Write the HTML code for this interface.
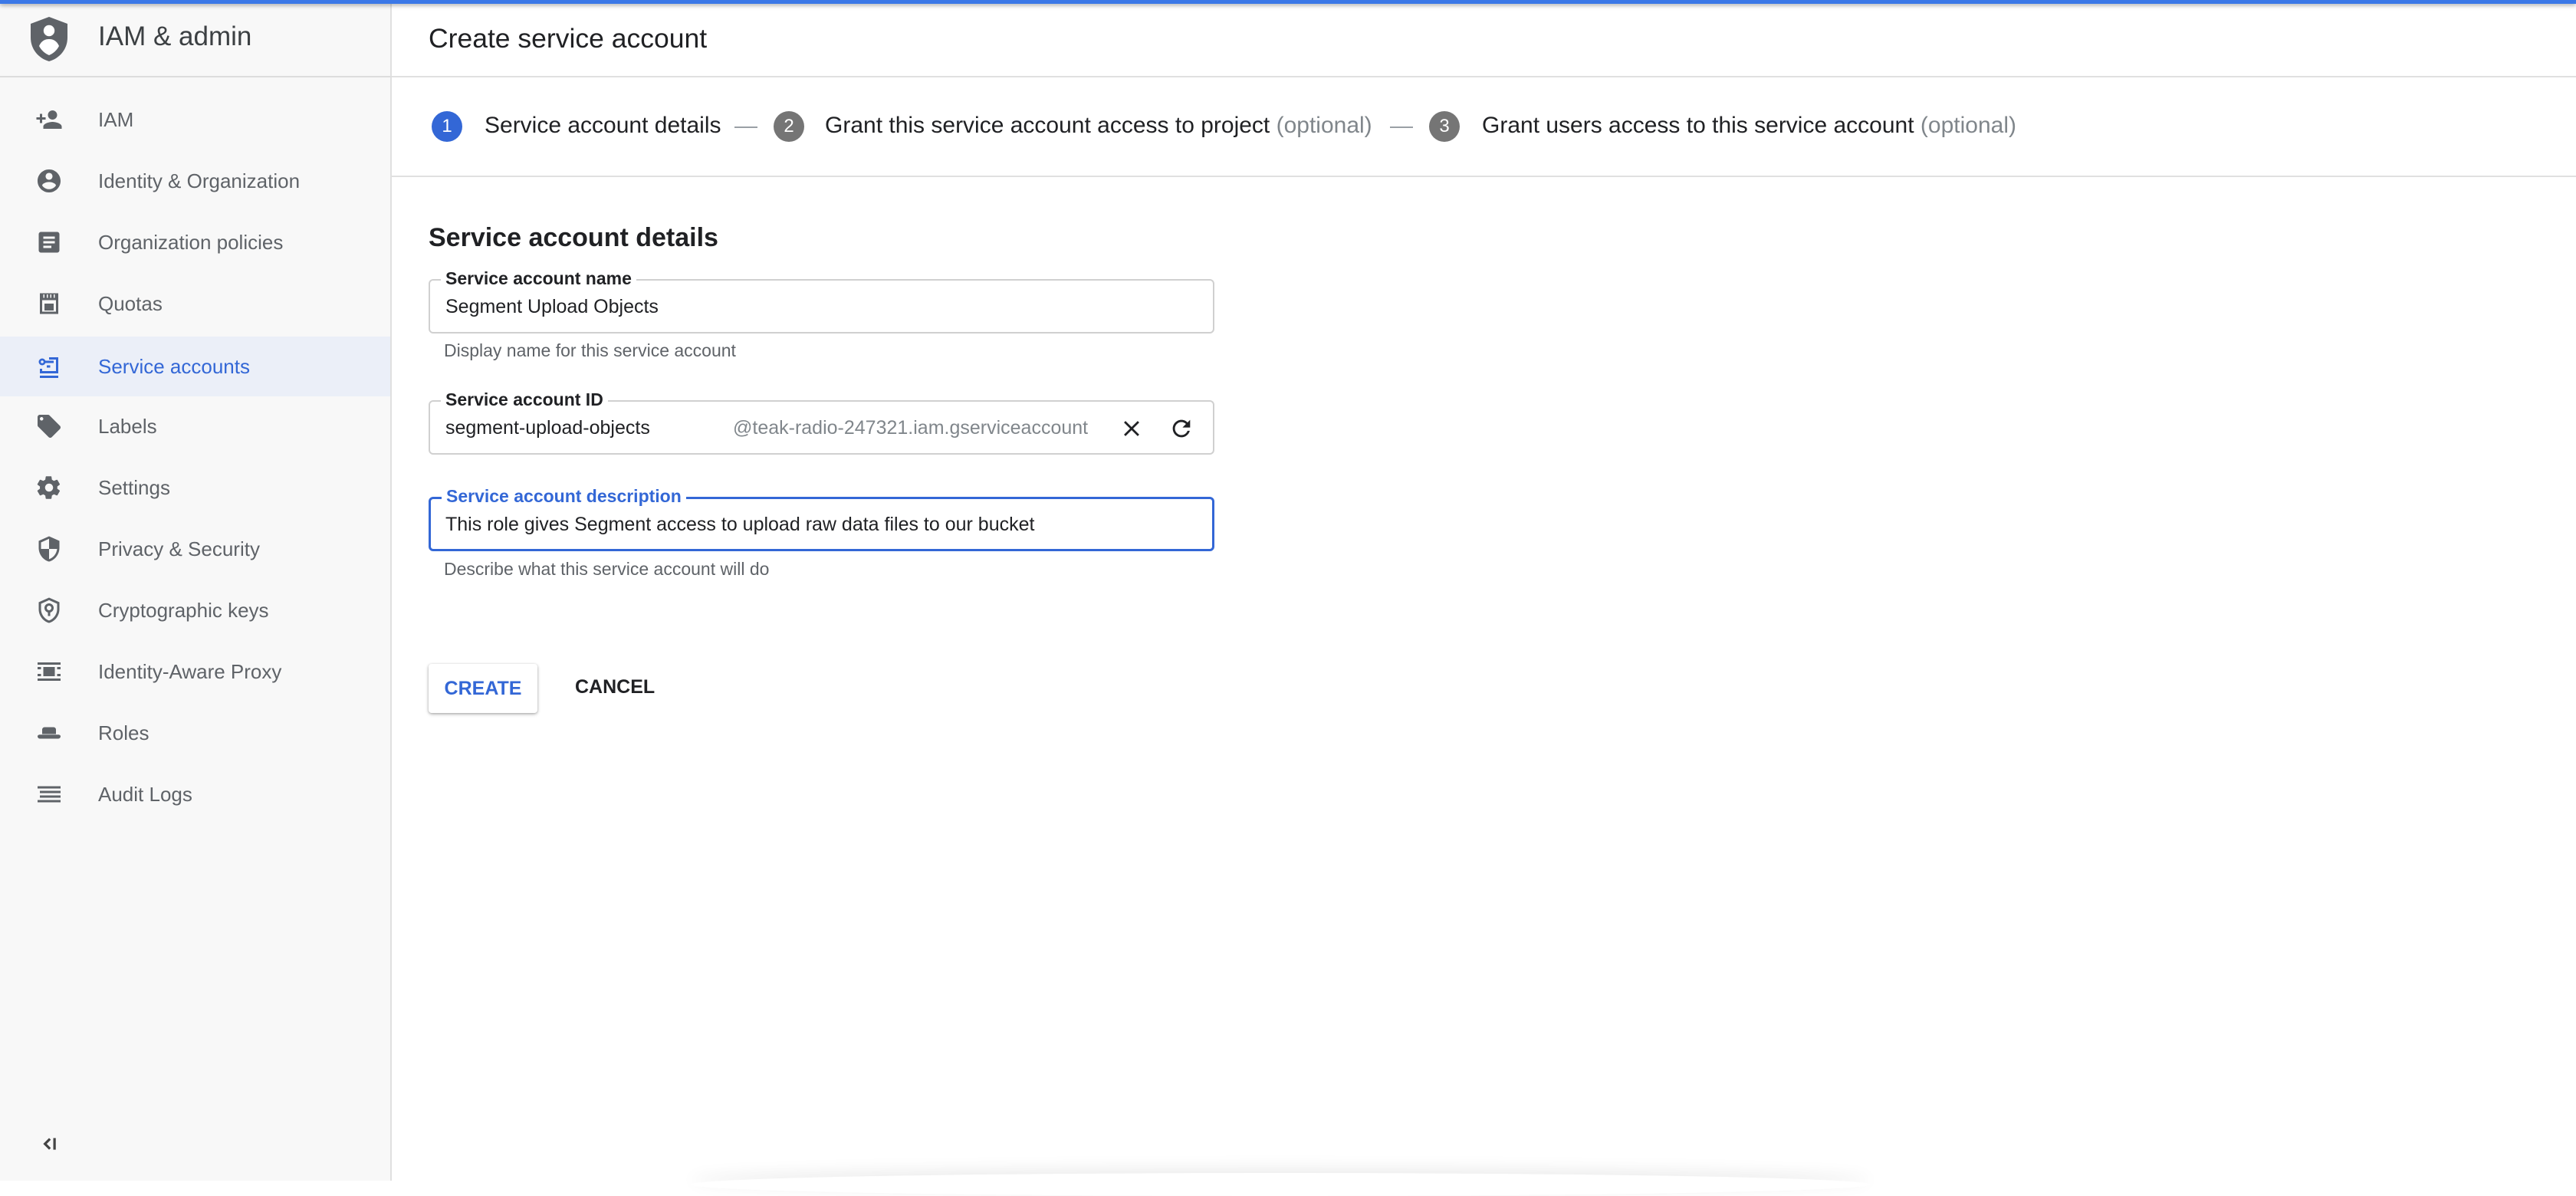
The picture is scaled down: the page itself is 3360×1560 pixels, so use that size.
<!DOCTYPE html>
<html><head><meta charset="utf-8"><style>
*{margin:0;padding:0;box-sizing:border-box}
body{width:3360px;height:1540px;overflow:hidden;background:#fff;font-family:"Liberation Sans",Arial,sans-serif;position:relative;color:#202124}
.topbar{position:absolute;left:0;top:0;width:3360px;height:5px;background:#3b78e7;box-shadow:0 2px 6px rgba(0,0,0,.35);z-index:5}
.side{position:absolute;left:0;top:0;width:511px;height:1540px;background:#f8f8f8;border-right:2px solid #e0e0e0}
.hline{position:absolute;left:0;top:99px;width:3360px;height:2px;background:#e0e0e0}
.brand{position:absolute;left:128px;top:28px;font-size:35px;color:#3c4043}
.nav{position:absolute;left:0;width:509px;height:78px;display:flex;align-items:center}
.nav svg{position:absolute;left:46px;width:36px;height:36px}
.nav span{position:absolute;left:128px;font-size:26px;color:#5f6368}
.nav.act{background:#ebeff8}
.nav.act span{color:#3367d6}
.title{position:absolute;left:559px;top:30px;font-size:35.5px;color:#202124}
.sline{position:absolute;left:511px;top:229px;width:2849px;height:2px;background:#e0e0e0}
.step{position:absolute;top:145px;width:40px;height:40px;border-radius:50%;color:#fff;font-size:24px;text-align:center;line-height:40px}
.stxt{position:absolute;top:147px;font-size:30px;color:#202124;white-space:nowrap}
.opt{color:#80868b}
.dash{position:absolute;top:165px;width:30px;height:2px;background:#9aa0a6}
h2{position:absolute;left:559px;top:291px;font-size:34px;font-weight:bold;color:#202124}
.field{position:absolute;left:559px;width:1025px;height:71px;border:2px solid #d0d0d0;border-radius:6px}
.field.f{border:3px solid #3367d6}
.lab{position:absolute;left:14px;top:-16px;background:#fff;padding:0 6px;font-size:23px;font-weight:bold;color:#202124;line-height:26px}
.f .lab{color:#3367d6;top:-17px}
.val{position:absolute;left:20px;top:20px;font-size:25px;color:#202124}
.help{position:absolute;left:579px;font-size:23px;color:#5f6368}
.btn{position:absolute;left:559px;top:866px;width:142px;height:64px;border-radius:4px;box-shadow:0 1px 3px rgba(0,0,0,.3),0 2px 6px rgba(0,0,0,.12);color:#3367d6;font-size:25px;font-weight:bold;text-align:center;line-height:64px}
.cancel{position:absolute;left:750px;top:882px;font-size:25px;font-weight:bold;color:#202124}
.bshadow{position:absolute;left:900px;top:1530px;width:1540px;height:30px;border-radius:50%;box-shadow:0 -6px 20px rgba(0,0,0,.08)}
</style></head><body>
<div class="topbar"></div>
<div class="side">
<svg style="position:absolute;left:40px;top:22px" width="48" height="58" viewBox="0 0 24 29"><path d="M12 0L0 4.5v9C0 21 5 27 12 29c7-2 12-8 12-15.5v-9z" fill="#5f6368"/><circle cx="12" cy="9" r="3.6" fill="#fff"/><path d="M5.5 19c1.5-3.5 4-4.5 6.5-4.5s5 1 6.5 4.5c-1.5 3-4 5-6.5 6-2.5-1-5-3-6.5-6z" fill="#fff"/></svg>
<div class="brand">IAM &amp; admin</div>
<div class="nav" style="top:117px"><svg viewBox="0 0 24 24"><path d="M15 12c2.2 0 4-1.8 4-4s-1.8-4-4-4-4 1.8-4 4 1.8 4 4 4zm-9-2V7H4v3H1v2h3v3h2v-3h3v-2H6zm9 4c-2.7 0-8 1.3-8 4v2h16v-2c0-2.7-5.3-4-8-4z" fill="#5f6368"/></svg><span>IAM</span></div>
<div class="nav" style="top:197px"><svg viewBox="0 0 24 24"><path d="M12 2C6.5 2 2 6.5 2 12s4.5 10 10 10 10-4.5 10-10S17.5 2 12 2zm0 3c1.7 0 3 1.3 3 3s-1.3 3-3 3-3-1.3-3-3 1.3-3 3-3zm0 14.2c-2.5 0-4.7-1.3-6-3.2 0-2 4-3.1 6-3.1s6 1.1 6 3.1c-1.3 1.9-3.5 3.2-6 3.2z" fill="#5f6368"/></svg><span>Identity &amp; Organization</span></div>
<div class="nav" style="top:277px"><svg viewBox="0 0 24 24"><path d="M19 3H5c-1.1 0-2 .9-2 2v14c0 1.1.9 2 2 2h14c1.1 0 2-.9 2-2V5c0-1.1-.9-2-2-2zm-5 14H7v-2h7v2zm3-4H7v-2h10v2zm0-4H7V7h10v2z" fill="#5f6368"/></svg><span>Organization policies</span></div>
<div class="nav" style="top:357px"><svg viewBox="0 0 24 24"><path d="M4 3h16v18H4z" fill="#5f6368"/><path d="M6 9h12v10H6z" fill="#f8f8f8"/><path d="M8 12h8v6H8z" fill="#5f6368"/><path d="M7 4h1v3H7zm3 0h1v3h-1zm3 0h1v3h-1zm3 0h1v3h-1z" fill="#f8f8f8"/></svg><span>Quotas</span></div>
<div class="nav act" style="top:439px"><svg viewBox="0 0 24 24"><circle cx="6" cy="8" r="3" fill="#3367d6"/><circle cx="6" cy="8" r="1.2" fill="#ebeff8"/><path d="M8 7h8v2H8zM12 4h8v14H4v-4h2v2h12V6h-6z" fill="#3367d6"/><path d="M10 11h3v2h-3zM4 20h16v2H4z" fill="#3367d6"/></svg><span>Service accounts</span></div>
<div class="nav" style="top:517px"><svg viewBox="0 0 24 24"><path d="M21.4 11.6l-9-9C12.1 2.2 11.6 2 11 2H4c-1.1 0-2 .9-2 2v7c0 .6.2 1.1.6 1.4l9 9c.4.4.9.6 1.4.6s1.1-.2 1.4-.6l7-7c.4-.4.6-.9.6-1.4s-.2-1.1-.6-1.4zM5.5 7C4.7 7 4 6.3 4 5.5S4.7 4 5.5 4 7 4.7 7 5.5 6.3 7 5.5 7z" fill="#5f6368"/></svg><span>Labels</span></div>
<div class="nav" style="top:597px"><svg viewBox="0 0 24 24"><path d="M19.1 12.9c0-.3.1-.6.1-.9s0-.6-.1-.9l2.1-1.6c.2-.2.2-.4.1-.6l-2-3.5c-.1-.2-.4-.3-.6-.2l-2.5 1c-.5-.4-1.1-.7-1.7-1l-.4-2.6c0-.2-.2-.4-.5-.4h-4c-.2 0-.4.2-.5.4l-.4 2.6c-.6.3-1.2.6-1.7 1l-2.5-1c-.2-.1-.5 0-.6.2l-2 3.5c-.1.2-.1.5.1.6l2.1 1.6c0 .3-.1.6-.1.9s0 .6.1.9l-2.1 1.6c-.2.2-.2.4-.1.6l2 3.5c.1.2.4.3.6.2l2.5-1c.5.4 1.1.7 1.7 1l.4 2.6c0 .2.2.4.5.4h4c.2 0 .5-.2.5-.4l.4-2.6c.6-.3 1.2-.6 1.7-1l2.5 1c.2.1.5 0 .6-.2l2-3.5c.1-.2.1-.5-.1-.6l-2.1-1.6zM12 15.5c-1.9 0-3.5-1.6-3.5-3.5s1.6-3.5 3.5-3.5 3.5 1.6 3.5 3.5-1.6 3.5-3.5 3.5z" fill="#5f6368"/></svg><span>Settings</span></div>
<div class="nav" style="top:677px"><svg viewBox="0 0 24 24"><path d="M12 1L3 5v6c0 5.6 3.8 10.7 9 12 5.2-1.3 9-6.4 9-12V5l-9-4zm0 11h7c-.5 4.1-3.3 7.8-7 8.9V12H5V6.3l7-3.1V12z" fill="#5f6368"/></svg><span>Privacy &amp; Security</span></div>
<div class="nav" style="top:757px"><svg viewBox="0 0 24 24"><path d="M12 1L3 5v6c0 5.6 3.8 10.7 9 12 5.2-1.3 9-6.4 9-12V5l-9-4zm0 19.9c-3.8-1.2-7-5.3-7-9.9V6.3l7-3.1 7 3.1V11c0 4.6-3.2 8.7-7 9.9z" fill="#5f6368"/><circle cx="12" cy="10" r="3" fill="none" stroke="#5f6368" stroke-width="2"/><path d="M11 12h2v5h-2z" fill="#5f6368"/></svg><span>Cryptographic keys</span></div>
<div class="nav" style="top:837px"><svg viewBox="0 0 24 24"><path d="M2 4h20v2H2zM2 18h20v2H2zM7 8h10v8H7zM2 8h3v2H2zm0 6h3v2H2zm17-6h3v2h-3zm0 6h3v2h-3z" fill="#5f6368"/></svg><span>Identity-Aware Proxy</span></div>
<div class="nav" style="top:917px"><svg viewBox="0 0 24 24"><path d="M6 9c0-1 1-2 2-2h8c1 0 2 1 2 2v4H6z" fill="#5f6368"/><path d="M2 15c0-1 1-1.5 2-1.5h16c1 0 2 .5 2 1.5s-1 2-2 2H4c-1 0-2-1-2-2z" fill="#5f6368"/></svg><span>Roles</span></div>
<div class="nav" style="top:997px"><svg viewBox="0 0 24 24"><path d="M2 5h20v2H2zm2 4h18v2H4zm0 4h18v2H4zm-2 4h20v2H2z" fill="#5f6368"/></svg><span>Audit Logs</span></div>
<svg style="position:absolute;left:50px;top:1479px" width="26" height="26" viewBox="0 0 24 24"><path d="M14 6l-6 6 6 6" fill="none" stroke="#444" stroke-width="3"/><path d="M18 5h3v14h-3z" fill="#444"/></svg>
</div>
<div class="hline" style="left:511px"></div>
<div class="hline" style="width:511px;background:#ddd"></div>
<div class="title">Create service account</div>
<div class="step" style="left:563px;background:#3367d6">1</div>
<div class="stxt" style="left:632px">Service account details</div>
<div class="dash" style="left:958px"></div>
<div class="step" style="left:1009px;background:#757575">2</div>
<div class="stxt" style="left:1076px">Grant this service account access to project <span class="opt">(optional)</span></div>
<div class="dash" style="left:1813px"></div>
<div class="step" style="left:1864px;background:#757575">3</div>
<div class="stxt" style="left:1933px">Grant users access to this service account <span class="opt">(optional)</span></div>
<div class="sline"></div>
<h2>Service account details</h2>
<div class="field" style="top:364px"><div class="lab">Service account name</div><div class="val">Segment Upload Objects</div></div>
<div class="help" style="top:444px">Display name for this service account</div>
<div class="field" style="top:522px"><div class="lab">Service account ID</div><div class="val">segment-upload-objects</div>
<div class="val" style="left:395px;color:#80868b">@teak-radio-247321.iam.gserviceaccount</div>
<svg style="position:absolute;left:898px;top:18px" width="34" height="34" viewBox="0 0 24 24"><path d="M19 6.4L17.6 5 12 10.6 6.4 5 5 6.4 10.6 12 5 17.6 6.4 19 12 13.4 17.6 19 19 17.6 13.4 12z" fill="#202124"/></svg>
<svg style="position:absolute;left:963px;top:18px" width="34" height="34" viewBox="0 0 24 24"><path d="M17.6 6.4C16.2 4.9 14.2 4 12 4c-4.4 0-8 3.6-8 8s3.6 8 8 8c3.7 0 6.8-2.6 7.7-6h-2.1c-.8 2.3-3 4-5.6 4-3.3 0-6-2.7-6-6s2.7-6 6-6c1.7 0 3.1.7 4.2 1.8L13 11h7V4l-2.4 2.4z" fill="#202124"/></svg></div>
<div class="field f" style="top:648px"><div class="lab">Service account description</div><div class="val" style="top:19px;left:19px">This role gives Segment access to upload raw data files to our bucket</div></div>
<div class="help" style="top:729px">Describe what this service account will do</div>
<div class="btn">CREATE</div>
<div class="cancel">CANCEL</div>
<div class="bshadow"></div>
</body></html>
